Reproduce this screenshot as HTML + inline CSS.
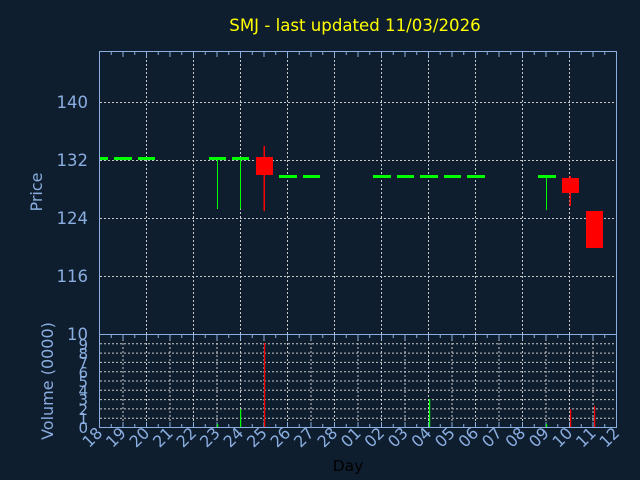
<!DOCTYPE html>
<html><head><style>
html,body{margin:0;padding:0;background:#0f1e2f;width:640px;height:480px;overflow:hidden}
text{font-family:"DejaVu Sans","Liberation Sans",sans-serif}
</style></head><body>
<svg width="640" height="480" xmlns="http://www.w3.org/2000/svg">
<rect width="640" height="480" fill="#0f1e2f"/>
<text x="355" y="31" fill="#ffff00" font-size="16.6" text-anchor="middle">SMJ - last updated 11/03/2026</text>
<g stroke="#c8c8c8" stroke-width="1" stroke-dasharray="2,2">
<line x1="100" y1="102.5" x2="616" y2="102.5"/>
<line x1="100" y1="160.5" x2="616" y2="160.5"/>
<line x1="100" y1="218.5" x2="616" y2="218.5"/>
<line x1="100" y1="276.5" x2="616" y2="276.5"/>
<line x1="146.5" y1="52" x2="146.5" y2="334"/><line x1="193.5" y1="52" x2="193.5" y2="334"/><line x1="240.5" y1="52" x2="240.5" y2="334"/><line x1="287.5" y1="52" x2="287.5" y2="334"/><line x1="334.5" y1="52" x2="334.5" y2="334"/><line x1="381.5" y1="52" x2="381.5" y2="334"/><line x1="428.5" y1="52" x2="428.5" y2="334"/><line x1="475.5" y1="52" x2="475.5" y2="334"/><line x1="522.5" y1="52" x2="522.5" y2="334"/><line x1="569.5" y1="52" x2="569.5" y2="334"/>
</g>
<g stroke="#c8c8c8" stroke-width="1" stroke-dasharray="2,2" id="vg"></g>
<g stroke="#8aaee0" stroke-width="1" id="tk"></g>
<g fill="none" stroke="#8aaee0" stroke-width="1">
<rect x="99.5" y="51.5" width="517" height="283"/>
<rect x="99.5" y="334.5" width="517" height="93"/>
</g>
<g fill="#00ff00">
<rect x="100" y="157" width="8" height="3"/><rect x="114" y="157" width="18" height="3"/><rect x="138" y="157" width="17" height="3"/>
<rect x="209" y="157" width="17" height="3"/><rect x="232" y="157" width="17" height="3"/>
<rect x="279" y="175" width="18" height="3"/><rect x="303" y="175" width="17" height="3"/>
<rect x="373" y="175" width="18" height="3"/><rect x="397" y="175" width="17" height="3"/><rect x="420" y="175" width="18" height="3"/><rect x="444" y="175" width="17" height="3"/><rect x="467" y="175" width="18" height="3"/>
<rect x="538" y="175" width="18" height="3"/>
<rect x="217" y="159" width="1" height="50"/><rect x="240" y="159" width="1" height="50"/><rect x="546" y="176" width="1" height="34"/>
</g>
<g fill="#ff0000">
<rect x="263.5" y="146" width="1.5" height="65"/><rect x="256" y="157" width="17" height="18"/>
<rect x="569.5" y="176" width="1.5" height="30"/><rect x="562" y="178" width="17" height="15"/>
<rect x="586" y="211" width="17" height="37"/>
</g>
<g fill="#8aaee0" font-size="16.5" text-anchor="end">
<text x="88" y="108">140</text><text x="88" y="166">132</text><text x="88" y="224">124</text><text x="88" y="282">116</text><text x="88" y="340">10</text>
</g>
<g fill="#8aaee0" font-size="15" text-anchor="end">
<text x="88" y="433">0</text><text x="88" y="424">1</text><text x="88" y="415">2</text><text x="88" y="405">3</text><text x="88" y="396">4</text><text x="88" y="387">5</text><text x="88" y="378">6</text><text x="88" y="368">7</text><text x="88" y="359">8</text><text x="88" y="350">9</text>
</g>
<text transform="translate(42,192) rotate(-90)" fill="#8aaee0" font-size="16" text-anchor="middle">Price</text>
<text transform="translate(53,381) rotate(-90)" fill="#8aaee0" font-size="16" text-anchor="middle">Volume (0000)</text>
<text x="348" y="471" fill="#000" font-size="15.5" text-anchor="middle">Day</text>
<g id="xl" fill="#8aaee0" font-size="16"></g>
<g id="vb"></g>
<script>
var ns="http://www.w3.org/2000/svg";
function ln(g,a,b,c,d){var l=document.createElementNS(ns,'line');l.setAttribute('x1',a);l.setAttribute('y1',b);l.setAttribute('x2',c);l.setAttribute('y2',d);g.appendChild(l);}
var vg=document.getElementById('vg');
for(var i=1;i<22;i++){var x=99.5+i*23.5;ln(vg,x,335,x,427);}
for(var j=1;j<10;j++){var y=427.5-j*9.3;ln(vg,100,y,616,y);}
var tk=document.getElementById('tk');
for(var i=1;i<44;i++){var x=99.5+i*11.75;ln(tk,x,52,x,i%2?55:57);ln(tk,x,335,x,i%2?338:340);ln(tk,x,427,x,i%2?424:422);}
var labs=["18","19","20","21","22","23","24","25","26","27","28","01","02","03","04","05","06","07","08","09","10","11","12"];
var xl=document.getElementById('xl');
labs.forEach(function(s,i){var x=99.5+i*23.5;var t=document.createElementNS(ns,'text');t.setAttribute('transform','translate('+(x+4)+',434) rotate(-45)');t.setAttribute('text-anchor','end');t.textContent=s;xl.appendChild(t);});
var vb=[[217,424,'#00ff00'],[240,409,'#00ff00'],[264,343,'#ff0000'],[429,399,'#00ff00'],[546,424,'#00ff00'],[570,409,'#ff0000'],[594,406,'#ff0000']];
var g=document.getElementById('vb');
vb.forEach(function(b){var r=document.createElementNS(ns,'rect');r.setAttribute('x',b[0]);r.setAttribute('y',b[1]);r.setAttribute('width',1.2);r.setAttribute('height',427-b[1]);r.setAttribute('fill',b[2]);g.appendChild(r);});
</script>
</svg>
</body></html>
